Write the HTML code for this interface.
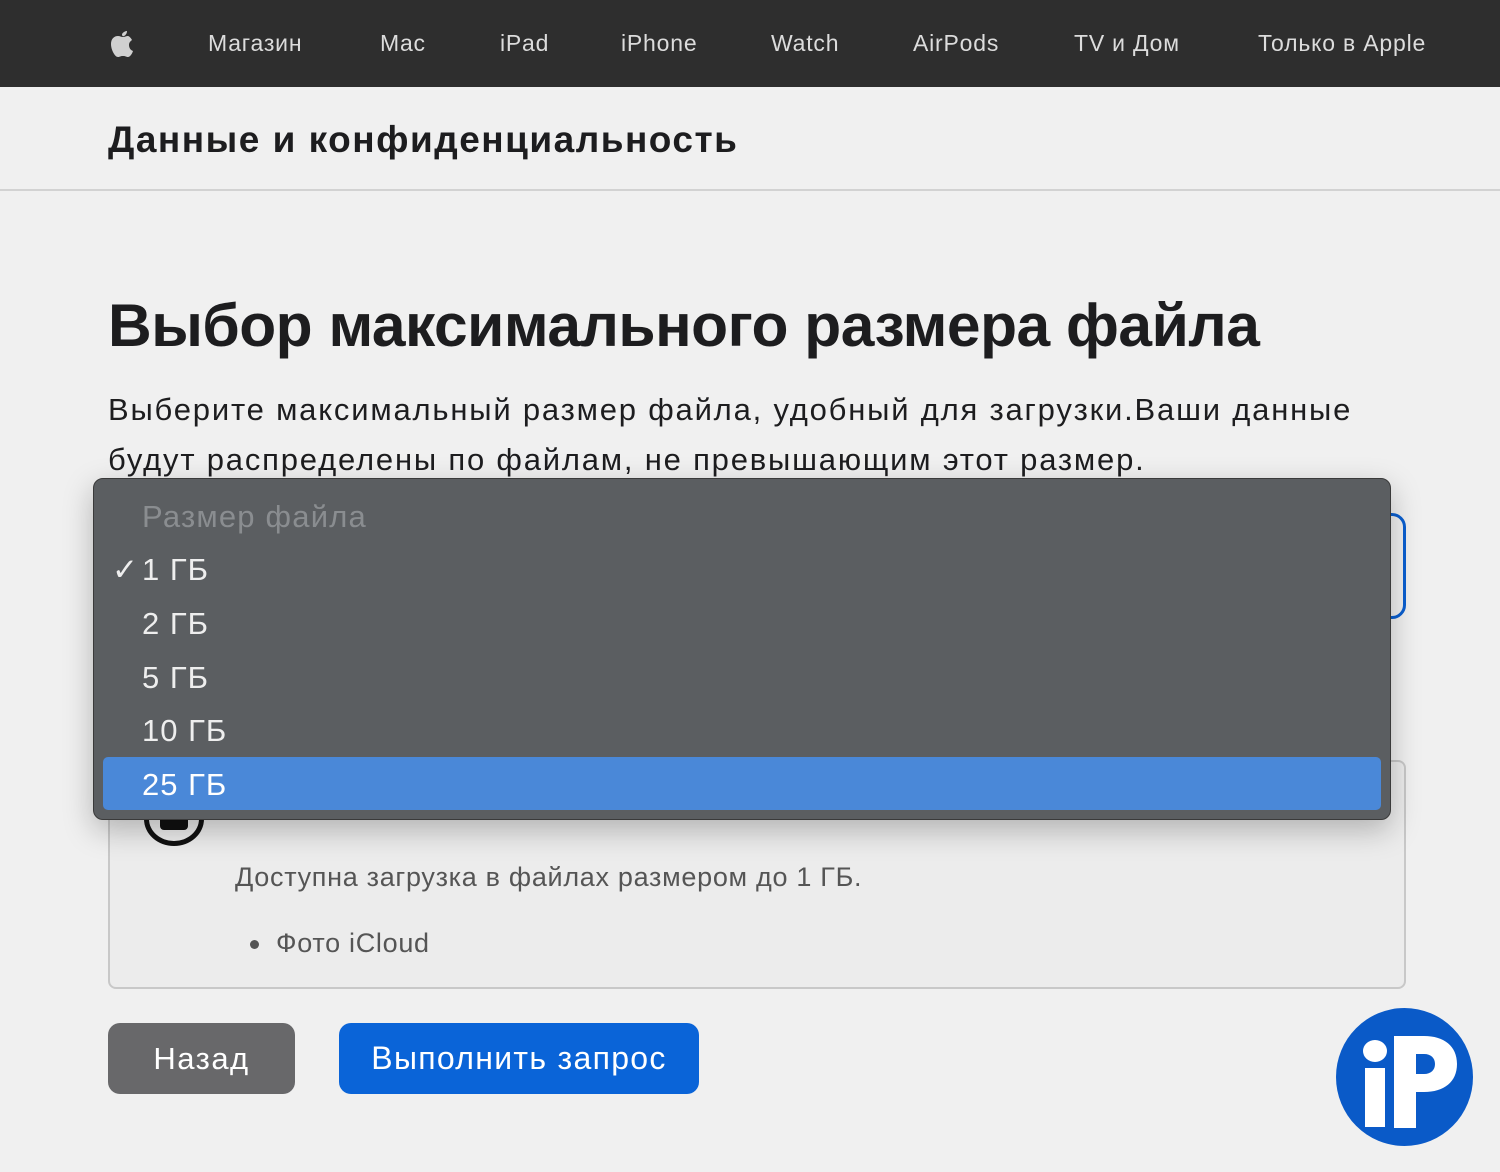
<!DOCTYPE html>
<html><head><meta charset="utf-8"><style>
*{margin:0;padding:0;box-sizing:border-box}
body{width:1500px;height:1172px;background:#f0f0f0;font-family:"Liberation Sans",sans-serif;position:relative;overflow:hidden}
.nav{position:absolute;left:0;top:0;width:1500px;height:87px;background:#2e2e2e}
.nav span{position:absolute;top:30px;font-size:23px;color:#dcdcdc;line-height:26px;letter-spacing:0.8px}
.hdr{position:absolute;left:0;top:87px;width:1500px;height:104px;border-bottom:2px solid #d2d2d2;background:#f0f0f0}
.hdr h2{position:absolute;left:108px;top:32px;font-size:37px;font-weight:bold;color:#1d1d1f;letter-spacing:1.5px}
.abs{position:absolute}
.dd{font-size:31px;color:#eee;letter-spacing:1px}
</style></head><body>
<div class="nav">
<svg class="abs" style="left:108px;top:26px" width="28" height="32" viewBox="0 0 28 32"><path fill="#d0d0d0" d="M14 8c2-3 5-3 5-3 0 2-1 4-3 5-1 .5-2 .3-2-2zM20 10c-2 0-3 1-5 1s-3-1-5-1c-4 0-7 3-7 8 0 6 4 13 7 13 2 0 2-1 5-1s3 1 5 1c2 0 4-3 5-6-3-1-4-4-4-6 0-3 2-4 3-5-1-2-3-4-4-4z"/></svg>
<span style="left:208px">Магазин</span>
<span style="left:380px">Mac</span>
<span style="left:500px">iPad</span>
<span style="left:621px">iPhone</span>
<span style="left:771px">Watch</span>
<span style="left:913px">AirPods</span>
<span style="left:1074px">TV и Дом</span>
<span style="left:1258px">Только в Apple</span>
</div>
<div class="hdr"><h2>Данные и конфиденциальность</h2></div>
<div class="abs" style="left:108px;top:290px;font-size:60.5px;font-weight:bold;color:#1d1d1f;letter-spacing:-0.5px;white-space:nowrap">Выбор максимального размера файла</div>
<div class="abs" style="left:108px;top:385px;font-size:31px;line-height:50px;color:#1d1d1f;width:1390px;letter-spacing:1.8px;white-space:nowrap">Выберите максимальный размер файла, удобный для загрузки.Ваши данные<br>будут распределены по файлам, не превышающим этот размер.</div>
<div class="abs" style="left:300px;top:513px;width:1106px;height:106px;border:3px solid #0a5fd0;border-radius:14px"></div>
<div class="abs" style="left:108px;top:760px;width:1298px;height:229px;border:2px solid #c8c8c8;border-radius:8px;background:#ececec"></div>
<div class="abs" style="left:144px;top:792px;width:60px;height:54px;border:5px solid #111;border-radius:50%"></div>
<div class="abs" style="left:160px;top:806px;width:28px;height:24px;background:#111;border-radius:4px"></div>
<div class="abs" style="left:235px;top:862px;font-size:27px;color:#555;letter-spacing:0.7px">Доступна загрузка в файлах размером до 1 ГБ.</div>
<div class="abs" style="left:250px;top:940px;width:9px;height:9px;border-radius:50%;background:#555"></div>
<div class="abs" style="left:276px;top:928px;font-size:27px;color:#555;letter-spacing:0.7px">Фото iCloud</div>
<div class="abs" style="left:93px;top:478px;width:1298px;height:342px;background:#5b5e61;border:1px solid #3a3a3a;border-radius:10px;box-shadow:0 10px 30px rgba(0,0,0,.25)">
<div class="abs dd" style="left:48px;top:20px;color:#8a8d90;letter-spacing:1.2px">Размер файла</div>
<div class="abs dd" style="left:18px;top:73px">✓</div>
<div class="abs dd" style="left:48px;top:73px">1 ГБ</div>
<div class="abs dd" style="left:48px;top:127px">2 ГБ</div>
<div class="abs dd" style="left:48px;top:181px">5 ГБ</div>
<div class="abs dd" style="left:48px;top:234px">10 ГБ</div>
<div class="abs" style="left:9px;top:278px;width:1278px;height:53px;background:#4a88d8;border-radius:5px"></div>
<div class="abs dd" style="left:48px;top:288px;color:#fff">25 ГБ</div>
</div>
<div class="abs" style="left:108px;top:1023px;width:187px;height:71px;background:#68686a;border-radius:12px;color:#fff;font-size:31px;line-height:71px;text-align:center;letter-spacing:1.5px">Назад</div>
<div class="abs" style="left:339px;top:1023px;width:360px;height:71px;background:#0a64d8;border-radius:12px;color:#fff;font-size:32px;line-height:71px;text-align:center;letter-spacing:1.3px">Выполнить запрос</div>
<div class="abs" style="left:1336px;top:1008px;width:137px;height:138px;border-radius:50%;background:#0a5ac8"></div>
<div class="abs" style="left:1363px;top:1040px;width:24px;height:22px;border-radius:50%;background:#fff"></div>
<div class="abs" style="left:1365px;top:1068px;width:20px;height:59px;background:#fff"></div>
<svg class="abs" style="left:1394px;top:1036px" width="66" height="92" viewBox="0 0 66 92"><path fill="#fff" fill-rule="evenodd" d="M0 0h30c20 0 33 10 33 28s-13 28-33 28H22v36H0zM22 18v20h8c7 0 11-4 11-10s-4-10-11-10z"/></svg>
</body></html>
